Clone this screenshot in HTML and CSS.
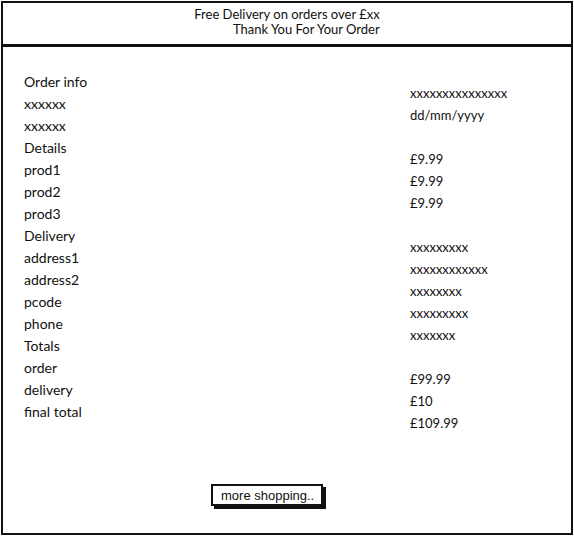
FILE: index.html
```html
<!DOCTYPE html>
<html>
<head>
<meta charset="utf-8">
<link rel="stylesheet" href="styles.css">
</head>
<body>
<header class="banner">
  <div class="banner-text">
    <div>Free Delivery on orders over £xx</div>
    <div>Thank You For Your Order</div>
  </div>
</header>
<main class="panel">
  <div class="cols">
    <ul class="labels">
      <li>Order info</li>
      <li>xxxxxx</li>
      <li>xxxxxx</li>
      <li>Details</li>
      <li>prod1</li>
      <li>prod2</li>
      <li>prod3</li>
      <li>Delivery</li>
      <li>address1</li>
      <li>address2</li>
      <li>pcode</li>
      <li>phone</li>
      <li>Totals</li>
      <li>order</li>
      <li>delivery</li>
      <li>final total</li>
    </ul>
    <ul class="values">
      <li>xxxxxxxxxxxxxxx</li>
      <li>dd/mm/yyyy</li>
      <li class="blank"></li>
      <li>£9.99</li>
      <li>£9.99</li>
      <li>£9.99</li>
      <li class="blank"></li>
      <li>xxxxxxxxx</li>
      <li>xxxxxxxxxxxx</li>
      <li>xxxxxxxx</li>
      <li>xxxxxxxxx</li>
      <li>xxxxxxx</li>
      <li class="blank"></li>
      <li>£99.99</li>
      <li>£10</li>
      <li>£109.99</li>
    </ul>
  </div>
  <div class="actions">
    <button class="btn">more shopping..</button>
  </div>
</main>
</body>
</html>
```

FILE: styles.css
```css
html, body {
  margin: 0;
  padding: 0;
  background: #fff;
}
body {
  font-family: "Lato", "Noto Sans", sans-serif;
  color: #111;
  padding: 1px 1px 0 1px;
  width: 572px;
}
.banner {
  box-sizing: border-box;
  height: 45px;
  border: 2px solid #111;
  display: flex;
  justify-content: center;
  padding-top: 4px;
}
.banner-text {
  text-align: right;
  font-size: 13px;
  line-height: 15px;
}
.panel {
  box-sizing: border-box;
  height: 489px;
  border: 2px solid #111;
  border-top-width: 1px;
  padding: 24px 0 0 21px;
  display: flex;
  flex-direction: column;
}
.cols {
  display: flex;
}
ul {
  list-style: none;
  margin: 0;
  padding: 0;
}
.labels {
  width: 386px;
  font-size: 14px;
  line-height: 22px;
}
.values {
  padding-top: 11px;
  font-size: 13px;
  line-height: 22px;
}
.values .blank {
  height: 22px;
}
.actions {
  padding: 50px 0 0 187px;
}
.btn {
  font-family: "Liberation Sans", Arial, sans-serif;
  font-size: 13px;
  color: #111;
  background: #fff;
  border: 2px solid #111;
  box-shadow: 3px 3px 0 #111;
  padding: 2px 7px 3px 8px;
  height: 22px;
  line-height: 15px;
}
```
